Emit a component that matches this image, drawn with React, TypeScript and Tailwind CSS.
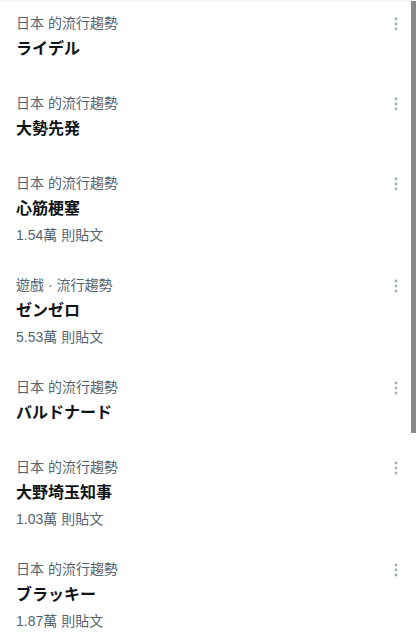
const trends = [
  { label: "日本 的流行趨勢", title: "ライデル" },
  { label: "日本 的流行趨勢", title: "大勢先発" },
  { label: "日本 的流行趨勢", title: "心筋梗塞", posts: "1.54萬 則貼文" },
  { label: "遊戲 · 流行趨勢", title: "ゼンゼロ", posts: "5.53萬 則貼文" },
  { label: "日本 的流行趨勢", title: "バルドナード" },
  { label: "日本 的流行趨勢", title: "大野埼玉知事", posts: "1.03萬 則貼文" },
  { label: "日本 的流行趨勢", title: "ブラッキー", posts: "1.87萬 則貼文" },
];

const tc = { fontFamily: '"Liberation Sans", "Noto Sans CJK TC", sans-serif' };
const jp = { fontFamily: '"Liberation Sans", "Noto Sans CJK JP", sans-serif' };

function MoreIcon() {
  return (
    <svg width="6" height="14" viewBox="0 0 6 14" className="text-[#a3adb7]">
      <circle cx="3" cy="2" r="1.4" fill="currentColor" />
      <circle cx="3" cy="7" r="1.4" fill="currentColor" />
      <circle cx="3" cy="12" r="1.4" fill="currentColor" />
    </svg>
  );
}

function TrendItem({ label, title, posts }: { label: string; title: string; posts?: string }) {
  return (
    <div className={`flex pl-4 pr-3 pt-3 ${posts ? "pb-[18px]" : "pb-5"}`}>
      <div className="flex min-w-0 flex-1 flex-col">
        <div className="h-5 text-[14px] leading-5 text-[#536471]" style={tc}>
          {label}
        </div>
        <div className="mt-1 h-6 text-[16px] font-bold leading-6 text-[#0f1419]" style={jp}>
          {title}
        </div>
        {posts && (
          <div className="mt-1 h-5 text-[14px] leading-5 text-[#536471]" style={tc}>
            {posts}
          </div>
        )}
      </div>
      <div className="pt-[4px]">
        <MoreIcon />
      </div>
    </div>
  );
}

export default function App() {
  return (
    <div className="flex h-[640px] w-[416px] overflow-hidden border-t border-[#eff3f4] bg-white">
      <div className="flex-1">
        {trends.map((t, i) => (
          <TrendItem key={i} {...t} />
        ))}
      </div>
      <div className="w-[5px]">
        <div className="h-[432px] bg-[#8a8a8a]" />
      </div>
    </div>
  );
}
